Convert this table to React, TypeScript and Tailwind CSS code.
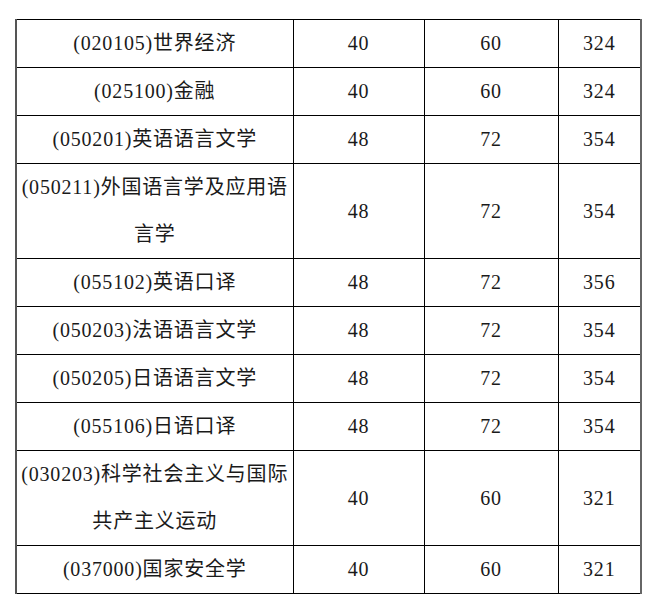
import React from "react";

const rows: { name: React.ReactNode; a: string; b: string; c: string; tall?: boolean }[] = [
  { name: "(020105)世界经济", a: "40", b: "60", c: "324" },
  { name: "(025100)金融", a: "40", b: "60", c: "324" },
  { name: "(050201)英语语言文学", a: "48", b: "72", c: "354" },
  {
    name: (
      <>
        (050211)外国语言学及应用语
        <br />
        言学
      </>
    ),
    a: "48",
    b: "72",
    c: "354",
    tall: true,
  },
  { name: "(055102)英语口译", a: "48", b: "72", c: "356" },
  { name: "(050203)法语语言文学", a: "48", b: "72", c: "354" },
  { name: "(050205)日语语言文学", a: "48", b: "72", c: "354" },
  { name: "(055106)日语口译", a: "48", b: "72", c: "354" },
  {
    name: (
      <>
        (030203)科学社会主义与国际
        <br />
        共产主义运动
      </>
    ),
    a: "40",
    b: "60",
    c: "321",
    tall: true,
  },
  { name: "(037000)国家安全学", a: "40", b: "60", c: "321" },
];

export default function App() {
  return (
    <div className="w-[658px] h-[609px] bg-white pt-[19px] pl-[15px] font-['Liberation_Serif','Noto_Sans_CJK_SC',serif]">
      <table className="table-fixed border-collapse w-[625px] text-[20px] tracking-[0.8px] text-[#1a1a1a] font-['Liberation_Serif','Noto_Sans_CJK_SC',serif]">
        <colgroup>
          <col className="w-[277px]" />
          <col className="w-[131px]" />
          <col className="w-[134px]" />
          <col className="w-[83px]" />
        </colgroup>
        <tbody>
          {rows.map((r, i) => (
            <tr key={i} className={r.tall ? "h-[95px]" : "h-[48px]"}>
              <td className="border border-black border-l-2 border-l-[#555] text-center align-middle p-0 leading-[47px] whitespace-nowrap">
                {r.name}
              </td>
              <td className="border border-black text-center align-middle p-0 leading-[47px]">{r.a}</td>
              <td className="border border-black border-l-[#555] text-center align-middle p-0 leading-[47px]">{r.b}</td>
              <td className="border border-black border-r-2 border-r-[#666] text-center align-middle p-0 leading-[47px]">{r.c}</td>
            </tr>
          ))}
        </tbody>
      </table>
    </div>
  );
}
